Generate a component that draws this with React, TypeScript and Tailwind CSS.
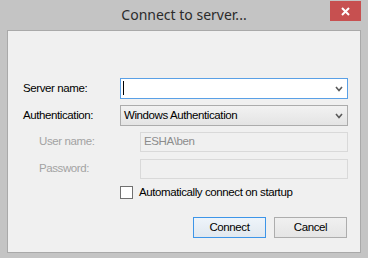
import React from "react";

const lbl = "font-['Liberation_Sans',Arial,sans-serif] text-[11.5px] tracking-[-0.4px] leading-none";

function Chevron() {
  return (
    <svg width="8" height="6" viewBox="0 0 8 6" className="shrink-0">
      <polyline points="1,1 4,4.5 7,1" fill="none" stroke="#5a5a5a" strokeWidth="1.6" />
    </svg>
  );
}

export default function App() {
  return (
    <div className="w-[368px] h-[258px] bg-[#c4c4c4] flex flex-col overflow-hidden">
      {/* title bar */}
      <div className="relative h-[30px] shrink-0 flex items-start justify-center">
        <span className="mt-[5px] font-['Noto_Sans','Open_Sans',sans-serif] text-[14px] leading-[20px] text-[#2b2b2b]">
          Connect to server...
        </span>
        <div className="absolute top-[1px] right-[7px] w-[31px] h-[20px] bg-[#c75050] flex items-center justify-center">
          <svg width="9" height="9" viewBox="0 0 9 9">
            <path d="M1 1 L8 8 M8 1 L1 8" stroke="#ffffff" strokeWidth="2" />
          </svg>
        </div>
      </div>
      {/* client area */}
      <div className="ml-[7px] mr-[7px] h-[223px] border border-[#a9a9a9] bg-[#f0f0f0] flex flex-col pt-[47px]">
        {/* server name */}
        <div className="flex items-center h-[21px] pl-[15px]">
          <span className={`${lbl} w-[97px] text-black`}>Server name:</span>
          <div className="relative w-[228px] h-[21px] bg-white border border-[#5aa0e6] flex items-center justify-end pr-[4px]">
            <div className="absolute left-[2px] top-[2px] w-[1px] h-[14px] bg-black" />
            <Chevron />
          </div>
        </div>
        {/* authentication */}
        <div className="flex items-center h-[21px] pl-[15px] mt-[6px]">
          <span className={`${lbl} w-[97px] text-black`}>Authentication:</span>
          <div className="w-[228px] h-[21px] bg-gradient-to-b from-[#f2f2f2] to-[#e4e4e4] border border-[#acacac] flex items-center justify-between pl-[3px] pr-[4px]">
            <span className={`${lbl} text-black`}>Windows Authentication</span>
            <Chevron />
          </div>
        </div>
        {/* user name */}
        <div className="flex items-center h-[20px] pl-[31px] mt-[6px]">
          <span className={`${lbl} w-[101px] text-[#a3a3a3]`}>User name:</span>
          <div className="w-[208px] h-[20px] bg-[#f0f0f0] border border-[#d9d9d9] flex items-center pl-[3px]">
            <span className={`${lbl} text-[#8c8c8c]`}>ESHA\ben</span>
          </div>
        </div>
        {/* password */}
        <div className="flex items-center h-[20px] pl-[31px] mt-[7px]">
          <span className={`${lbl} w-[101px] text-[#a3a3a3]`}>Password:</span>
          <div className="w-[208px] h-[20px] bg-[#f0f0f0] border border-[#d9d9d9]" />
        </div>
        {/* checkbox */}
        <div className="flex items-center h-[13px] pl-[112px] mt-[7px]">
          <div className="w-[13px] h-[13px] bg-white border border-[#707070]" />
          <span className={`${lbl} ml-[6px] text-black`}>Automatically connect on startup</span>
        </div>
        {/* buttons */}
        <div className="flex pl-[185px] mt-[18px] gap-[8px]">
          <div className="w-[73px] h-[21px] border border-[#3d95e8] bg-gradient-to-b from-[#eef4fa] to-[#e1e8ef] flex items-center justify-center">
            <span className={`${lbl} text-black`}>Connect</span>
          </div>
          <div className="w-[73px] h-[21px] border border-[#adadad] bg-gradient-to-b from-[#f0f0f0] to-[#e5e5e5] flex items-center justify-center">
            <span className={`${lbl} text-black`}>Cancel</span>
          </div>
        </div>
      </div>
    </div>
  );
}
